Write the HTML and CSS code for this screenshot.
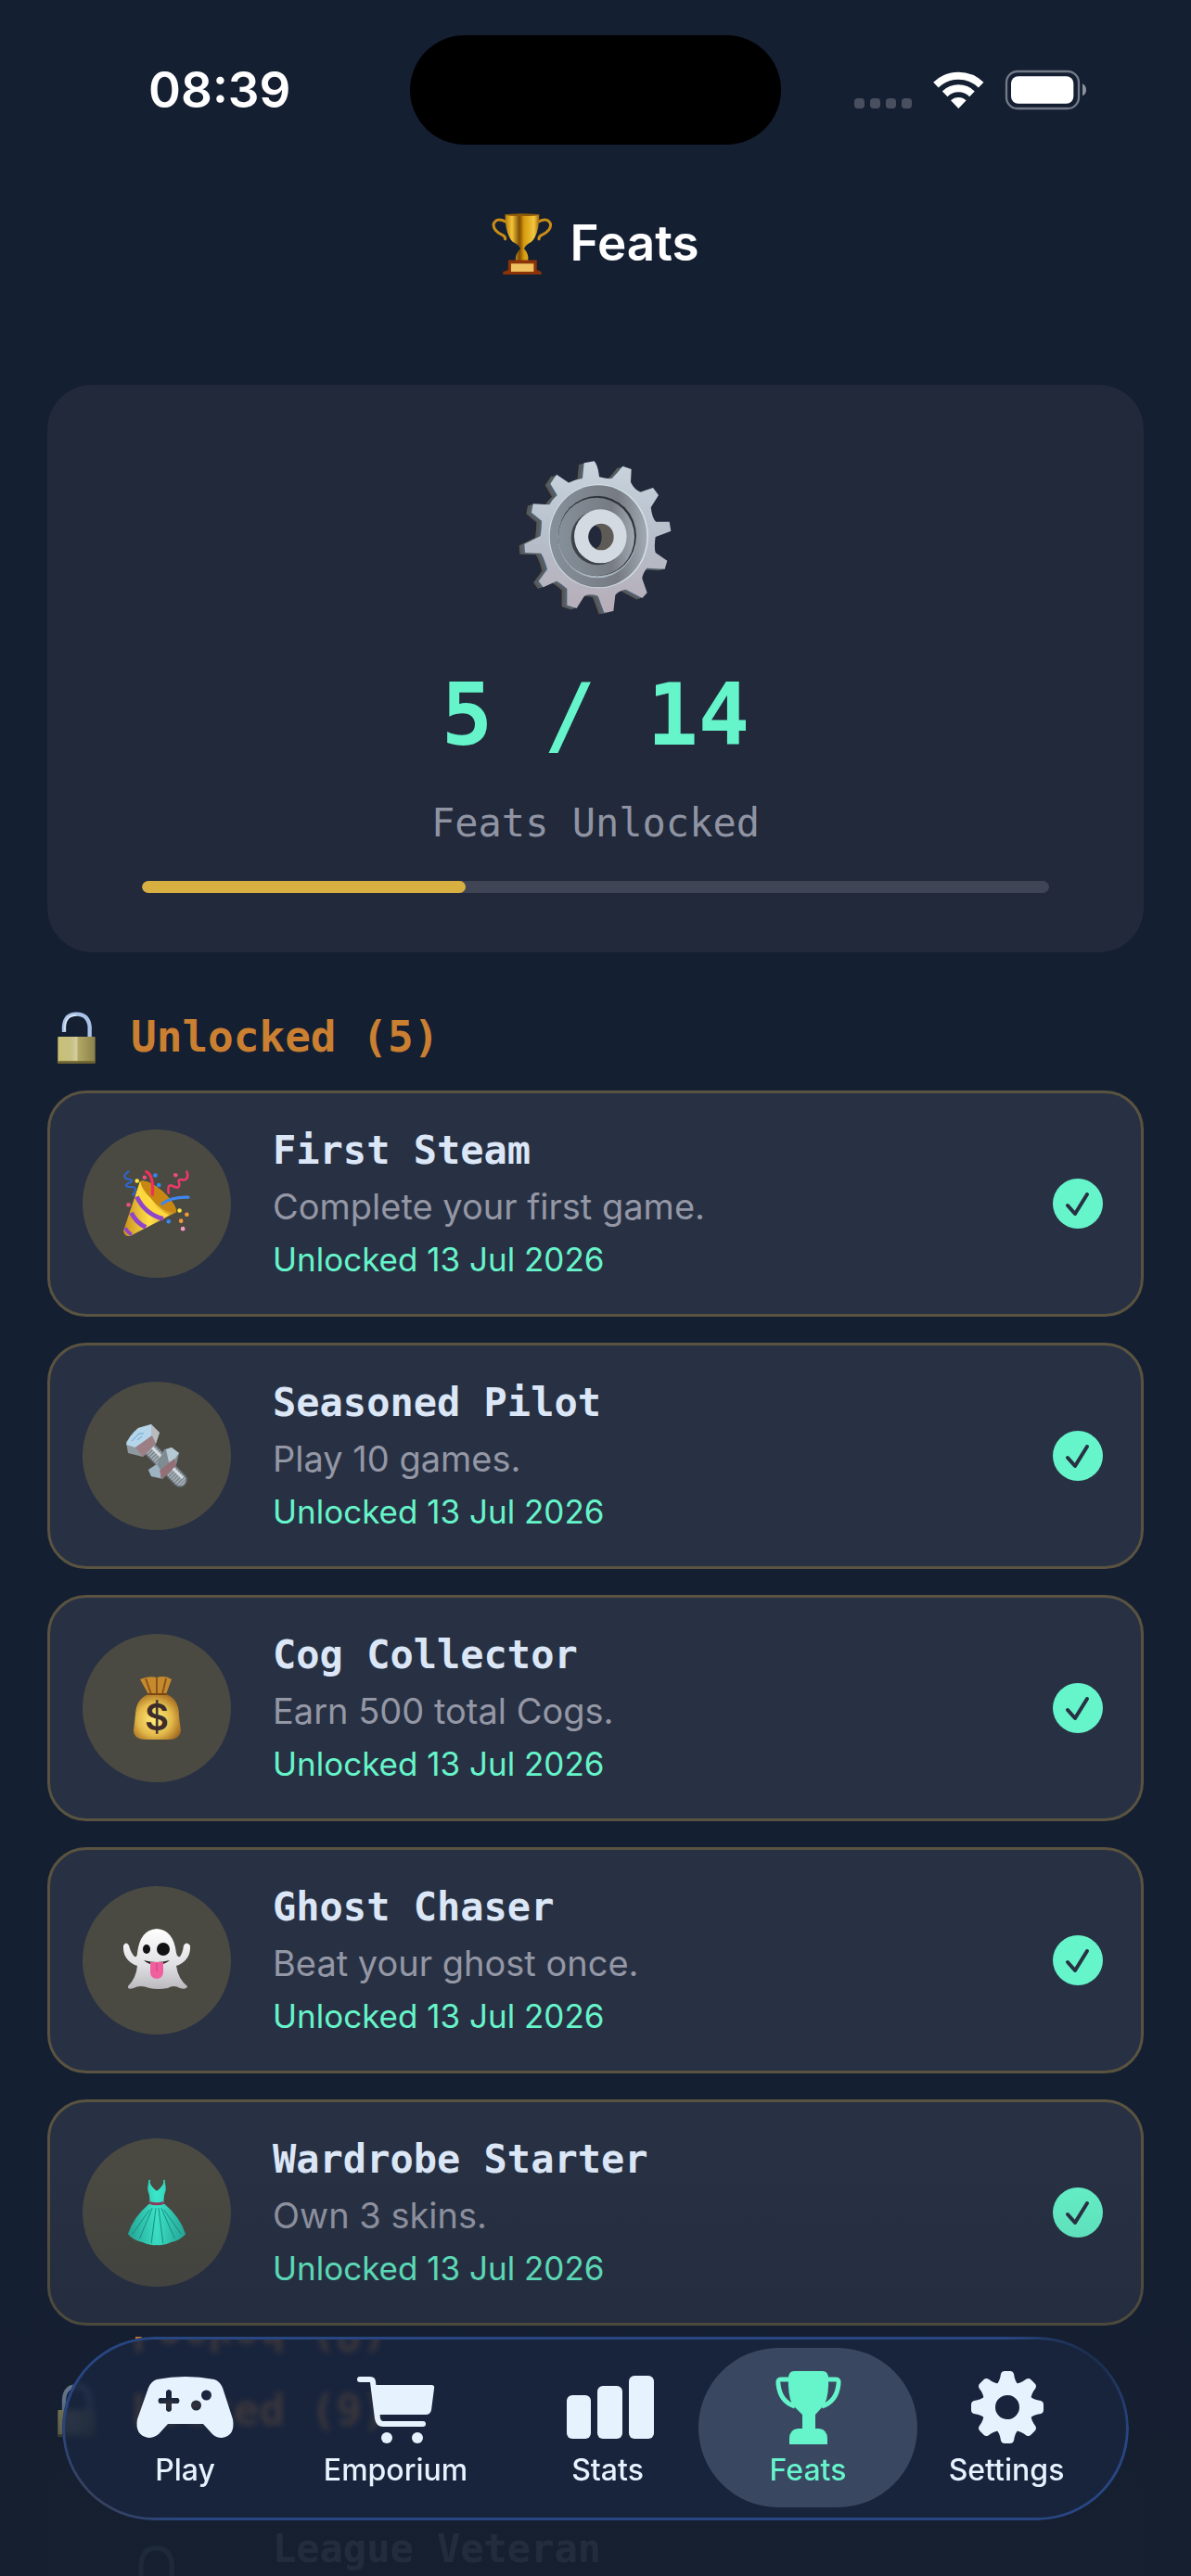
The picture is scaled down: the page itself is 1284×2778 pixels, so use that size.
FILE: index.html
```html
<!DOCTYPE html>
<html lang="en">
<head>
    <meta charset="UTF-8">
    <meta name="viewport" content="width=device-width, initial-scale=1.0">
    <title>Feats</title>
    <link rel="stylesheet" href="styles.css">
</head>
<body>
    <!-- Shared icons -->
    <svg class="defs" aria-hidden="true">
        <defs>
            <linearGradient id="gold" x1="0" x2="1">
                <stop offset="0" stop-color="#b87a08"/>
                <stop offset=".2" stop-color="#f3c437"/>
                <stop offset=".42" stop-color="#7d4c05"/>
                <stop offset=".55" stop-color="#d79a0c"/>
                <stop offset=".85" stop-color="#f2c640"/>
                <stop offset="1" stop-color="#9c6405"/>
            </linearGradient>
            <linearGradient id="brass" x1="0" x2="1">
                <stop offset="0" stop-color="#c9bf74"/>
                <stop offset=".35" stop-color="#c7c084"/>
                <stop offset=".5" stop-color="#d2cd9c"/>
                <stop offset=".55" stop-color="#b1a866"/>
                <stop offset="1" stop-color="#8a8148"/>
            </linearGradient>
            <linearGradient id="steel" x1="0" y1="0" x2="0" y2="1">
                <stop offset="0" stop-color="#c9d4dd"/>
                <stop offset=".5" stop-color="#b6bfca"/>
                <stop offset="1" stop-color="#b7adb8"/>
            </linearGradient>
            <linearGradient id="steel-dark" x1="0" x2="1">
                <stop offset="0" stop-color="#85909a"/>
                <stop offset=".7" stop-color="#777b83"/>
                <stop offset="1" stop-color="#a1a9b2"/>
            </linearGradient>
            <linearGradient id="cone" x1="0" x2="1">
                <stop offset="0" stop-color="#c98f1c"/>
                <stop offset=".5" stop-color="#ffe04a"/>
                <stop offset="1" stop-color="#c98a1c"/>
            </linearGradient>
            <radialGradient id="bag" cx=".45" cy=".55" r=".6">
                <stop offset="0" stop-color="#fff07c"/>
                <stop offset=".6" stop-color="#e3b94a"/>
                <stop offset="1" stop-color="#a56c20"/>
            </radialGradient>
            <linearGradient id="sheet" x1="0" y1="0" x2="0" y2="1">
                <stop offset="0" stop-color="#ffffff"/>
                <stop offset=".6" stop-color="#e0e0e4"/>
                <stop offset="1" stop-color="#b9b9be"/>
            </linearGradient>
            <linearGradient id="dress" x1="0" x2="1">
                <stop offset="0" stop-color="#26b09f"/>
                <stop offset=".5" stop-color="#3df0d2"/>
                <stop offset="1" stop-color="#26b09f"/>
            </linearGradient>
            <path id="cog-face" d="M327 118L360 112Q372 125 376 163Q398 170 417 168L434 150L452 128L480 138L478 180Q490 205 510 212L550 198L568 222L543 262Q548 300 560 308L603 308L608 338L558 357Q553 390 558 408L596 434L588 461L530 458Q515 478 515 492L531 538L515 555L462 527Q440 530 428 545L422 597L392 602L372 548Q345 540 328 548L303 588L272 578L272 525Q250 505 238 500L195 520L180 500L208 462Q200 430 188 410L136 408L134 380L186 354Q190 330 190 305L157 278L162 250L215 253Q225 235 240 222L218 185L238 155L278 182Q300 170 322 168Z"/>
            <symbol id="check" viewBox="0 0 54 54">
                <circle cx="27" cy="27" r="27" fill="#66f4ca"/>
                <path d="M16 29L24 38L37 17" fill="none" stroke="#283143" stroke-width="4" stroke-linecap="round" stroke-linejoin="round"/>
            </symbol>
            <symbol id="padlock" viewBox="33 22 132 178">
                <path d="M57 115V78Q60 34 98 34Q136 34 139 78V115" fill="none" stroke="#9fb4d2" stroke-width="13"/>
                <rect x="37" y="111" width="121" height="86" rx="3" fill="url(#brass)"/>
                <rect x="37" y="190" width="121" height="7" rx="3" fill="#6b5f28"/>
            </symbol>
        </defs>
    </svg>

    <div class="app">
        <div class="status-bar">
            <span class="time">08:39</span>
            <span class="island"></span>
            <svg class="status-icons" viewBox="60 75 756 132" aria-hidden="true">
                <g fill="#48505f">
                    <rect x="63" y="168" width="33" height="33" rx="11"/>
                    <rect x="114" y="168" width="33" height="33" rx="11"/>
                    <rect x="165" y="168" width="33" height="33" rx="11"/>
                    <rect x="216" y="168" width="33" height="33" rx="11"/>
                </g>
                <g fill="none" stroke="#fff" stroke-width="24">
                    <path d="M327 125A104 104 0 0 1 473 125"/>
                    <path d="M356 154A63 63 0 0 1 444 154"/>
                </g>
                <path d="M400 201L375 175A36 36 0 0 1 425 175Z" fill="#fff"/>
                <rect x="555" y="81" width="234" height="120" rx="36" fill="none" stroke="#737a87" stroke-width="7"/>
                <rect x="570" y="97" width="202" height="88" rx="23" fill="#fff"/>
                <path d="M801 121Q813 127 813 141Q813 155 801 160Z" fill="#8d929c"/>
            </svg>
        </div>

        <header class="title-bar">
            <svg class="title-icon" viewBox="37 55 196 200" aria-hidden="true">
                <g fill="none" stroke="#c98d15" stroke-width="9" stroke-linecap="round">
                    <path d="M82 85Q52 70 43 92Q40 112 68 126Q82 132 80 141"/>
                    <path d="M187 85Q217 70 226 92Q229 112 201 126Q187 132 189 141"/>
                </g>
                <path d="M80 62H190Q190 125 165 150Q145 160 141 172Q158 190 153 212H114Q111 190 129 172Q125 160 104 150Q80 125 80 62Z" fill="url(#gold)"/>
                <ellipse cx="135" cy="63" rx="55" ry="4" fill="#8f5d0a"/>
                <path d="M90 209H182V240L197 247V255H73V247L90 240Z" fill="#8a3308"/>
                <rect x="99" y="220" width="73" height="26" fill="#efc160"/>
            </svg>
            <h1>Feats</h1>
        </header>

        <main>
            <section class="summary">
                <svg class="summary-icon" viewBox="112 105 504 504" aria-hidden="true">
                    <use href="#cog-face" x="-17" y="5" fill="#5c5650"/>
                    <use href="#cog-face" x="-9" y="3" fill="#4f6170"/>
                    <use href="#cog-face" fill="url(#steel)"/>
                    <ellipse cx="374" cy="355" rx="161" ry="168" fill="#d5dfe8"/>
                    <ellipse cx="373" cy="355" rx="157" ry="165" fill="url(#steel-dark)"/>
                    <ellipse cx="370" cy="357" rx="127" ry="133" fill="#a9b5c0"/>
                    <ellipse cx="370" cy="354" rx="126" ry="130" fill="#2e3339"/>
                    <ellipse cx="367" cy="357" rx="123" ry="127" fill="url(#steel-dark)"/>
                    <ellipse cx="371" cy="360" rx="86" ry="88" fill="#3e4248"/>
                    <ellipse cx="380" cy="355" rx="85" ry="87" fill="#d3dae2"/>
                    <ellipse cx="382" cy="357" rx="41" ry="43" fill="#5e5a56"/>
                    <path d="M362 320Q384 325 384 357Q384 384 366 395Q342 382 341 357Q342 332 362 320Z" fill="#21293b"/>
                </svg>
                <p class="summary-count">5 / 14</p>
                <p class="summary-label">Feats Unlocked</p>
                <div class="progress" role="progressbar" aria-valuemin="0" aria-valuemax="14" aria-valuenow="5" aria-label="Feats unlocked">
                    <div class="progress-fill" style="width: 35.7%"></div>
                </div>
            </section>

            <section>
                <h2>
                    <svg class="heading-icon" viewBox="33 22 132 178" aria-hidden="true">
                        <path d="M57 96V78Q60 38 97 38Q135 38 140 78V113" fill="none" stroke="#a9c3e6" stroke-width="13"/>
                        <path d="M60 92V78Q62 42 97 42" fill="none" stroke="#e6eef8" stroke-width="4"/>
                        <rect x="37" y="111" width="121" height="86" rx="3" fill="url(#brass)"/>
                        <rect x="37" y="190" width="121" height="7" rx="3" fill="#6b5f28"/>
                    </svg>
                    <span>Unlocked (5)</span>
                </h2>
                <ul class="feats">
                    <li class="feat">
                        <div class="feat-icon">
                            <svg viewBox="248 545 220 220" aria-hidden="true">
                                <path d="M303 582Q325 573 378 615Q425 660 422 683L270 762Q252 764 248 745Z" fill="url(#cone)"/>
                                <path d="M303 582Q325 573 378 615Q425 660 422 683Q380 690 340 640Q310 610 303 582Z" fill="#c88710"/>
                                <path d="M303 582Q310 625 350 660Q385 688 400 692L370 711Q320 690 288 628Z" fill="#ffd83e"/>
                                <g fill="none" stroke="#9145c9" stroke-width="15">
                                    <path d="M292 632Q320 690 379 705"/>
                                    <path d="M274 685Q290 717 322 733"/>
                                    <path d="M254 735Q262 750 275 757" stroke-width="11"/>
                                </g>
                                <g fill="none" stroke-linecap="round" stroke-width="10">
                                    <path d="M324 550Q348 560 344 625" stroke="#ef2f5c"/>
                                    <path d="M376 656Q405 632 462 634" stroke="#3f86f0"/>
                                    <path d="M397 620Q392 588 410 597Q436 610 432 588Q425 572 445 577Q466 575 457 550" stroke="#e83a68" stroke-width="8"/>
                                    <path d="M265 549Q240 568 262 574Q290 578 262 589Q248 600 272 600Q300 600 279 627" stroke="#2c68d8" stroke-width="6"/>
                                </g>
                                <g fill="#3388f2"><circle cx="353" cy="562" r="7"/><circle cx="365" cy="594" r="7"/><circle cx="397" cy="714" r="7"/></g>
                                <g fill="#e94f7c"><circle cx="318" cy="569" r="7"/><circle cx="420" cy="561" r="7"/><circle cx="265" cy="659" r="7"/></g>
                                <g fill="#ffe83e"><circle cx="293" cy="580" r="7"/><circle cx="433" cy="678" r="7"/></g>
                                <g fill="#f39b38"><circle cx="457" cy="691" r="7"/><circle cx="438" cy="712" r="7"/></g>
                                <circle cx="444" cy="738" r="7" fill="#f79acb"/>
                            </svg>
                        </div>
                        <div class="feat-body">
                            <h3>First Steam</h3>
                            <p class="feat-text">Complete your first game.</p>
                            <p class="feat-date">Unlocked 13 Jul 2026</p>
                        </div>
                        <svg class="feat-check" role="img" aria-label="Unlocked"><use href="#check"/></svg>
                    </li>
                    <li class="feat">
                        <div class="feat-icon">
                            <svg viewBox="0 0 72 72" aria-hidden="true">
                                <path d="M28 28L61 62" stroke="#5d676e" stroke-width="16" stroke-linecap="round"/>
                                <path d="M28 28L61 62" stroke="#a3adb3" stroke-width="13" stroke-linecap="round"/>
                                <path d="M28 28L64 65" stroke="#6f7a81" stroke-width="13" stroke-dasharray="1 2"/>
                                <path d="M30 26L64 60" stroke="#d5dde2" stroke-width="3"/>
                                <path d="M44 29L52 27L60 33L57 46L42 61L30 58L27 51L36 45Z" fill="#7f8a91"/>
                                <path d="M46 29L52 27L60 33L55 40L49 43Z" fill="#b5c9d4"/>
                                <path d="M27 51L36 45L40 51L40 60L30 58Z" fill="#9db3c1"/>
                                <path d="M39 52L55 39L57 46L42 61Z" fill="#946f75"/>
                                <path d="M16 6L30 2L39 11L35 23L21 37L5 33L3 21Z" fill="#8f999f"/>
                                <path d="M16 6L30 2L32 9L30 15L13 27L3 24Q6 14 16 6Z" fill="#b4d5ea"/>
                                <path d="M30 2L39 11L35 23L30 15Z" fill="#b9bcbe"/>
                                <path d="M13 27L31 14L35 23L21 37Z" fill="#9c7f84"/>
                                <path d="M9 20L17 12L22 12M15 19L20 15" fill="none" stroke="#6fa5cd" stroke-width="1"/>
                            </svg>
                        </div>
                        <div class="feat-body">
                            <h3>Seasoned Pilot</h3>
                            <p class="feat-text">Play 10 games.</p>
                            <p class="feat-date">Unlocked 13 Jul 2026</p>
                        </div>
                        <svg class="feat-check" role="img" aria-label="Unlocked"><use href="#check"/></svg>
                    </li>
                    <li class="feat">
                        <div class="feat-icon">
                            <svg viewBox="0 0 72 72" aria-hidden="true">
                                <path d="M18 5Q27 1 36 3Q45 0 52 5L46 21H27Z" fill="#c68a2e"/>
                                <path d="M24 4L30 21M36 3V21M46 4L42 21" stroke="#8b5518" stroke-width="2"/>
                                <path d="M27 21H46Q60 26 60 44Q61 54 62 60Q61 70 48 70H25Q11 70 11 60Q12 52 13 42Q14 26 27 21Z" fill="url(#bag)"/>
                                <path d="M26 21H47" stroke="#7c4812" stroke-width="2"/>
                                <text x="36" y="60" class="bag-sign">$</text>
                            </svg>
                        </div>
                        <div class="feat-body">
                            <h3>Cog Collector</h3>
                            <p class="feat-text">Earn 500 total Cogs.</p>
                            <p class="feat-date">Unlocked 13 Jul 2026</p>
                        </div>
                        <svg class="feat-check" role="img" aria-label="Unlocked"><use href="#check"/></svg>
                    </li>
                    <li class="feat">
                        <div class="feat-icon">
                            <svg viewBox="0 0 72 72" aria-hidden="true">
                                <path d="M36 2Q54 3 57 28Q58 33 61 32Q64 28 65 20Q68 15 72 20Q73 36 57 42Q59 56 69 64Q68 68 61 66Q54 62 48 66Q37 68 28 66Q18 62 11 66Q4 68 5 64Q14 55 15 42Q-1 36 0 20Q3 15 6 20Q8 28 12 32Q15 33 15 28Q18 3 36 2Z" fill="url(#sheet)"/>
                                <ellipse cx="25" cy="24" rx="4" ry="5" fill="#111"/>
                                <circle cx="43" cy="24" r="7" fill="#111"/>
                                <path d="M22 36Q36 40 50 36Q44 41 36 41Q27 41 22 36Z" fill="#222"/>
                                <path d="M29 38H43V49Q42 56 36 56Q29 55 29 49Z" fill="#ef5f9d"/>
                                <path d="M36 39V48" stroke="#cf3f80" stroke-width="1"/>
                            </svg>
                        </div>
                        <div class="feat-body">
                            <h3>Ghost Chaser</h3>
                            <p class="feat-text">Beat your ghost once.</p>
                            <p class="feat-date">Unlocked 13 Jul 2026</p>
                        </div>
                        <svg class="feat-check" role="img" aria-label="Unlocked"><use href="#check"/></svg>
                    </li>
                    <li class="feat">
                        <div class="feat-icon">
                            <svg viewBox="0 0 72 74" aria-hidden="true">
                                <path d="M28 1L27 10M44 1L45 10" stroke="#2cc9b3" stroke-width="2"/>
                                <path d="M28 3Q30 9 36 13Q42 9 44 3Q46 8 46 12Q43 20 44 27Q62 42 68 61Q62 68 52 70Q45 74 36 73Q27 74 20 70Q10 68 4 61Q10 42 28 27Q29 20 26 12Q26 8 28 3Z" fill="url(#dress)"/>
                                <path d="M31 32L17 66M35 32L30 71M38 32L43 71M41 32L56 66M28 34L9 61M44 34L63 61" stroke="#1c9384" stroke-width="1"/>
                                <path d="M28 26Q36 29 44 26" fill="none" stroke="#8d3f62" stroke-width="3"/>
                            </svg>
                        </div>
                        <div class="feat-body">
                            <h3>Wardrobe Starter</h3>
                            <p class="feat-text">Own 3 skins.</p>
                            <p class="feat-date">Unlocked 13 Jul 2026</p>
                        </div>
                        <svg class="feat-check" role="img" aria-label="Unlocked"><use href="#check"/></svg>
                    </li>
                </ul>
            </section>

            <section>
                <h2>
                    <svg class="heading-icon" aria-hidden="true"><use href="#padlock"/></svg>
                    <span class="mirrored">Locked (9)</span>
                </h2>
                <ul class="feats">
                    <li class="feat locked">
                        <div class="feat-icon">
                            <svg aria-hidden="true"><use href="#padlock"/></svg>
                        </div>
                        <div class="feat-body">
                            <h3>League Veteran</h3>
                        </div>
                    </li>
                </ul>
            </section>
        </main>

        <div class="bottom-fade"></div>

        <nav class="tab-bar">
            <a href="#play">
                <svg viewBox="0 0 112 80" aria-hidden="true">
                    <path fill-rule="evenodd" transform="translate(3 7)" d="M22 3Q53 -3 84 3Q90 5 93 12L104 46Q107 64 92 66Q86 66 82 62L72 51H34L24 62Q19 66 13 66Q-2 63 1 46L13 12Q16 5 22 3ZM32 16V23H25Q22 26 25 29H32V36Q35 40 38 36V29H45Q48 26 45 23H38V16Q35 12 32 16ZM70 20A5 5 0 0 0 81 20A5 5 0 0 0 70 20ZM59 31A5 5 0 0 0 70 31A5 5 0 0 0 59 31Z"/>
                </svg>
                <span>Play</span>
            </a>
            <a href="#emporium">
                <svg viewBox="0 0 112 80" aria-hidden="true">
                    <path d="M17 10H28Q31 10 31 13L36 52Q37 58 42 58H85" fill="none" stroke="currentColor" stroke-width="6" stroke-linecap="round"/>
                    <path d="M32 16H94Q98 16 97 20L94 43Q93 48 88 48H36Z"/>
                    <circle cx="46" cy="73" r="6"/>
                    <circle cx="79" cy="73" r="6"/>
                </svg>
                <span>Emporium</span>
            </a>
            <a href="#stats">
                <svg viewBox="0 0 112 80" aria-hidden="true">
                    <rect x="12" y="27" width="26" height="47" rx="6"/>
                    <rect x="45" y="17" width="27" height="57" rx="6"/>
                    <rect x="79" y="6" width="27" height="68" rx="6"/>
                </svg>
                <span>Stats</span>
            </a>
            <a href="#feats" class="active" aria-current="page">
                <svg viewBox="0 0 112 80" aria-hidden="true">
                    <path d="M35 7Q36 1 41 1H72Q77 1 78 7Q79 26 74 37L64 48V63H68Q77 64 77 74V80H36V74Q36 64 45 63H50V48L39 37Q34 26 35 7Z"/>
                    <path d="M36 10H27Q23 10 24 15Q26 34 42 39M77 10H86Q90 10 89 15Q87 34 71 39" fill="none" stroke="currentColor" stroke-width="5"/>
                </svg>
                <span>Feats</span>
            </a>
            <a href="#settings">
                <svg viewBox="0 0 112 80" aria-hidden="true">
                    <defs>
                        <path id="tooth" d="M-12 -24Q-8 -28 -7 -36Q-6 -39 -3 -39H3Q6 -39 7 -36Q8 -28 12 -24Z"/>
                    </defs>
                    <g transform="translate(57 40)">
                        <circle r="20" fill="none" stroke="currentColor" stroke-width="14"/>
                        <use href="#tooth"/>
                        <use href="#tooth" transform="rotate(45)"/>
                        <use href="#tooth" transform="rotate(90)"/>
                        <use href="#tooth" transform="rotate(135)"/>
                        <use href="#tooth" transform="rotate(180)"/>
                        <use href="#tooth" transform="rotate(225)"/>
                        <use href="#tooth" transform="rotate(270)"/>
                        <use href="#tooth" transform="rotate(315)"/>
                    </g>
                </svg>
                <span>Settings</span>
            </a>
        </nav>
    </div>
</body>
</html>
```
FILE: styles.css
```css
* {
    box-sizing: border-box;
}

body {
    margin: 0;
    background-color: #151f32;
    color: #fff;
    font-family: Inter, "Liberation Sans", sans-serif;
}

h1, h2, h3, p, ul {
    margin: 0;
    padding: 0;
}

svg {
    display: block;
    flex: none;
}

.defs {
    position: absolute;
    width: 0;
    height: 0;
}

.app {
    position: relative;
    height: 100vh;
    overflow: hidden;
}

/* Top of the screen */
.status-bar {
    display: grid;
    grid-template-columns: 1fr 400px 1fr;
    align-items: center;
    height: 194px;
}

.time {
    padding-left: 160px;
    font-size: 53px;
    font-weight: 600;
}

.island {
    height: 118px;
    border-radius: 59px;
    background-color: #000;
}

.status-icons {
    justify-self: end;
    width: 252px;
    height: 44px;
    margin-right: 112px;
}

.title-bar {
    display: flex;
    align-items: center;
    justify-content: center;
    gap: 18px;
    height: 136px;
}

.title-icon {
    width: 66px;
    height: 67px;
}

h1 {
    font-size: 53px;
    font-weight: 600;
}

main {
    padding: 85px 51px 0;
}

/* Progress summary */
.summary {
    display: flex;
    flex-direction: column;
    align-items: center;
    padding: 80px 102px 64px;
    border-radius: 48px;
    background-color: #21293b;
}

.summary-icon {
    width: 168px;
    height: 168px;
}

.summary-count {
    margin-top: 55px;
    color: #66f4ca;
    font: bold 92px/108px "DejaVu Sans Mono", monospace;
}

.summary-label {
    margin-top: 38px;
    color: #8f93a2;
    font: 42px/48px "DejaVu Sans Mono", monospace;
}

.progress {
    width: 100%;
    height: 13px;
    margin-top: 38px;
    border-radius: 7px;
    background-color: #404555;
    overflow: hidden;
}

.progress-fill {
    height: 100%;
    border-radius: 7px;
    background-color: #d8b041;
}

/* Feat lists */
h2 {
    display: flex;
    align-items: center;
    gap: 36px;
    margin: 64px 0 31px;
    padding-left: 10px;
    color: #ca7f31;
    font: bold 46px/54px "DejaVu Sans Mono", monospace;
}

.heading-icon {
    width: 44px;
    height: 60px;
    margin: -3px 0;
}

.mirrored {
    position: relative;
    z-index: 1;
    -webkit-box-reflect: above 27px linear-gradient(#000 46%, transparent 47%);
}

.feats {
    display: flex;
    flex-direction: column;
    gap: 28px;
    list-style: none;
}

.feat {
    display: flex;
    align-items: center;
    gap: 45px;
    height: 244px;
    padding: 0 41px 0 35px;
    border: 3px solid #595340;
    border-radius: 42px;
    background-color: #283143;
}

.feat-icon {
    display: flex;
    align-items: center;
    justify-content: center;
    width: 160px;
    height: 160px;
    border-radius: 50%;
    background-color: #4b4a42;
}

.feat-icon svg {
    width: 72px;
    height: 72px;
}

.bag-sign {
    fill: #3c2d2b;
    font-size: 40px;
    font-weight: 600;
    text-anchor: middle;
}

.feat-body {
    flex: 1;
    display: flex;
    flex-direction: column;
    gap: 12px;
}

h3 {
    color: #dbe6f6;
    font: bold 42px/50px "DejaVu Sans Mono", monospace;
}

.feat-text {
    color: #9497a5;
    font-size: 38px;
    line-height: 46px;
}

.feat-date {
    color: #66f4ca;
    font-size: 35px;
    line-height: 44px;
}

.feat-check {
    width: 54px;
    height: 54px;
}

.locked {
    border-color: transparent;
    background-color: #1b2538;
    opacity: 0.5;
}

.locked .feat-icon {
    background-color: transparent;
}

.locked .feat-body {
    padding-bottom: 60px;
}

/* Floating tab bar */
.bottom-fade {
    position: absolute;
    right: 0;
    bottom: 0;
    left: 0;
    height: 450px;
    background: linear-gradient(rgba(21, 31, 47, 0), rgba(21, 31, 47, 0.2) 40%, rgba(21, 31, 47, 0.5) 60%, rgba(21, 31, 47, 0.85) 80%, rgba(21, 31, 47, 0.88));
}

.tab-bar {
    position: absolute;
    z-index: 2;
    right: 67px;
    bottom: 60px;
    left: 67px;
    display: grid;
    grid-template-columns: 217fr 237fr 220fr 212fr 216fr;
    padding: 12px 24px 14px;
    border-radius: 99px;
    background-color: rgba(25, 38, 64, 0.8);
    backdrop-filter: blur(3px);
}

.tab-bar::before {
    content: "";
    position: absolute;
    inset: 0;
    padding: 3px;
    border-radius: 99px;
    background: radial-gradient(circle 90px at 96% 15%, #1b2b48, transparent), radial-gradient(circle 90px at 4% 82%, #3a3f55, transparent), #284681;
    mask: linear-gradient(#000 0 0) content-box exclude, linear-gradient(#000 0 0);
    pointer-events: none;
}

.tab-bar a {
    display: flex;
    flex-direction: column;
    align-items: center;
    gap: 10px;
    padding: 24px 0 22px;
    border-radius: 86px;
    color: #e6f3ff;
    fill: currentColor;
    font-size: 32px;
    font-weight: 500;
    line-height: 36px;
    text-decoration: none;
}

.tab-bar a svg {
    width: 112px;
    height: 80px;
}

.tab-bar .active {
    margin: 0 -12px;
    background-color: #394761;
    color: #66f4ca;
}
```
